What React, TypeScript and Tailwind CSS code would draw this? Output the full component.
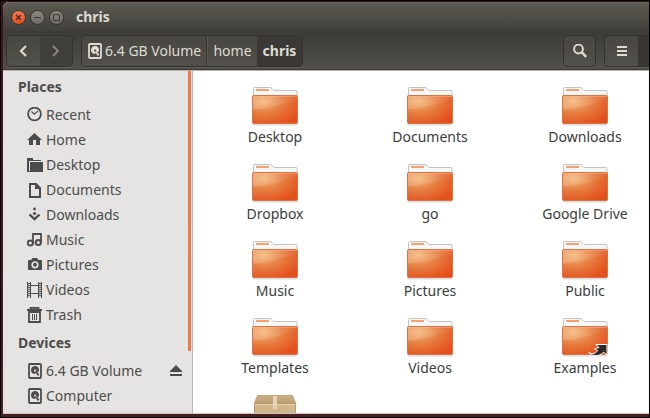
import { type FC, type ReactNode } from 'react';
import { twMerge } from 'tailwind-merge';

type IconName =
  | 'recent'
  | 'home'
  | 'desktop'
  | 'documents'
  | 'downloads'
  | 'music'
  | 'pictures'
  | 'videos'
  | 'trash'
  | 'drive';

const places: { label: string; icon: IconName }[] = [
  { label: 'Recent', icon: 'recent' },
  { label: 'Home', icon: 'home' },
  { label: 'Desktop', icon: 'desktop' },
  { label: 'Documents', icon: 'documents' },
  { label: 'Downloads', icon: 'downloads' },
  { label: 'Music', icon: 'music' },
  { label: 'Pictures', icon: 'pictures' },
  { label: 'Videos', icon: 'videos' },
  { label: 'Trash', icon: 'trash' },
];

const folders = [
  'Desktop',
  'Documents',
  'Downloads',
  'Dropbox',
  'go',
  'Google Drive',
  'Music',
  'Pictures',
  'Public',
  'Templates',
  'Videos',
  'Examples',
];

const iconShapes: Record<IconName, ReactNode> = {
  recent: (
    <>
      <circle cx="7.5" cy="7" r="6.4" fill="none" stroke="currentColor" strokeWidth="1.8" />
      <path d="M4.5 4.5 L7.3 7.2 L11 4" fill="none" stroke="currentColor" strokeWidth="1.2" />
    </>
  ),
  home: <path d="M7.5 1 L15 8 H13 V13 H9 V8 H6 V13 H2 V8 H0 Z" />,
  desktop: (
    <>
      <path d="M0 1 H6 V3 H14 V4 H2 V14 H0 Z" />
      <path d="M3 5 H16 V15 H0 V14 H3 Z" />
    </>
  ),
  documents: (
    <>
      <path d="M3 2 H9 L13 6 V15 H3 Z" fill="none" stroke="currentColor" strokeWidth="2" />
      <path d="M8 2 V7 H13 Z" />
    </>
  ),
  downloads: (
    <>
      <circle cx="7.5" cy="2" r="1.4" />
      <circle cx="7.5" cy="6.5" r="1.6" />
      <path d="M2.5 7.5 L7.5 12.2 L12.5 7.5" fill="none" stroke="currentColor" strokeWidth="2.4" />
    </>
  ),
  music: (
    <>
      <path d="M6 12 V2 H14 V11" fill="none" stroke="currentColor" strokeWidth="1.8" />
      <circle cx="3.3" cy="11" r="2.6" fill="none" stroke="currentColor" strokeWidth="2" />
      <circle cx="11.3" cy="10.5" r="2.6" fill="none" stroke="currentColor" strokeWidth="2" />
    </>
  ),
  pictures: (
    <>
      <path d="M1 4 Q1 3 2 3 H4 L5.5 1 H10 L11.5 3 H14 Q15 3 15 4 V12 Q15 13 14 13 H2 Q1 13 1 12 Z" />
      <circle cx="8" cy="7.8" r="3.6" fill="#e6e4e2" />
      <circle cx="8" cy="7.8" r="2" />
    </>
  ),
  videos: (
    <>
      <path d="M0 0 H1 V1 H3 V0 H4 V16 H3 V15 H1 V16 H0 Z M11 0 H12 V1 H14 V0 H15 V16 H14 V15 H12 V16 H11 Z" />
      <path d="M4 3.5 H11 M4 11.5 H11" stroke="currentColor" strokeWidth="1" />
      <path d="M2 2 V15 M13 2 V15" stroke="#e6e4e2" strokeWidth="1.6" strokeDasharray="1.2 0.8" />
    </>
  ),
  trash: (
    <>
      <path d="M0 3 H15 M3.5 3 V0.8 H11.5 V3" fill="none" stroke="currentColor" strokeWidth="1.8" />
      <path d="M2 5 V15 H13 V5 Z" fill="none" stroke="currentColor" strokeWidth="1.8" />
      <path d="M5.5 7 V13 M7.5 7 V13 M9.5 7 V13" stroke="currentColor" strokeWidth="1" />
    </>
  ),
  drive: (
    <>
      <rect x="2" y="1" width="12" height="14" rx="1" fill="none" stroke="currentColor" strokeWidth="1.8" />
      <path d="M8 3 C10.7 3 12 4.7 12 7 C12 8.2 11.6 9 11 9.6 L9 7.5 C9 6.4 7.2 6.2 7 7.4 C6.9 8.2 7.4 8.6 8 8.8 L8.4 11 C5.6 11 4 9.6 4 7 C4 4.7 5.6 3 8 3 Z" />
      <path d="M8.4 8.2 L11.7 12.4" stroke="currentColor" strokeWidth="1.8" />
    </>
  ),
};

const Icon: FC<{ name: IconName; className?: string }> = ({ name, className }) => (
  <svg viewBox="0 0 16 16" fill="currentColor" className={twMerge('size-4 shrink-0', className)}>
    {iconShapes[name]}
  </svg>
);

const FolderIcon: FC<{ link?: boolean }> = ({ link }) => (
  <svg viewBox="0 0 48 40" className="h-10 w-12">
    <rect x="2" y="37" width="44" height="2.5" rx="1" fill="#000" opacity="0.14" />
    <path
      d="M2.5 12 V2.5 Q2.5 1.5 3.5 1.5 H19 Q20 1.5 21 2.5 L23 4.5 H45 Q46 4.5 46 5.5 V12 Z"
      fill="#f6f6f5"
      stroke="#c3c3c1"
    />
    <rect x="5" y="3" width="13" height="2" rx="0.5" fill="#f3a070" />
    <rect x="1.5" y="9.5" width="45" height="28" rx="1" fill="url(#folderFill)" stroke="#d9744a" />
    <path d="M2 10 H46 V14 C32 17 18 23 2 23.5 Z" fill="url(#folderShine)" />
    <path d="M2 10.5 H46" stroke="#f7b98f" opacity="0.5" />
    {link && (
      <path
        d="M35 27.5 H46 V38 L42.5 35.2 C39 40 30 39.5 27.5 35 C31 38 35 36.5 36.5 33.5 L33.5 32 L38 30.5 Z"
        fill="#2d2826"
        stroke="#fff"
        strokeWidth="1"
      />
    )}
  </svg>
);

const PackageIcon: FC = () => (
  <svg viewBox="0 0 48 40" className="h-10 w-12">
    <path d="M6.5 1.5 H41.5 L45 10 H3 Z" fill="url(#boxLid)" stroke="#c3a57a" />
    <rect x="3.5" y="9.5" width="41" height="29" fill="#d1b58b" stroke="#bb9c72" />
    <path d="M4 10.5 H44" stroke="#e6d4b6" />
    <path d="M22 2 H26 V15 H22 Z" fill="#e4d4ba" />
  </svg>
);

const SidebarHeading: FC<{ children: ReactNode }> = ({ children }) => (
  <h2 className="flex h-[31px] items-center pl-[15px] font-bold">{children}</h2>
);

const SidebarRow: FC<{ icon: IconName; label: string; children?: ReactNode }> = ({ icon, label, children }) => (
  <li className="flex h-[25px] items-center pr-0.5 pl-6">
    <a href="#" className="flex flex-1 items-center gap-[3px]">
      <Icon name={icon} />
      <span>{label}</span>
    </a>
    {children}
  </li>
);

const groupStyle =
  'flex h-8 overflow-hidden rounded-[4px] border border-[#33322e] bg-linear-to-b from-[#474640] to-[#52504a] shadow-[0_1px_0_#5c5a53]';

const windowButton =
  'flex size-[15px] items-center justify-center rounded-full border border-[#35332f] bg-linear-to-b from-[#8d8a82] to-[#6b6962] text-[#3a3935]';

const Window: FC = () => (
  <div className="flex h-full flex-col overflow-hidden rounded-tl-md bg-white">
    <header className="flex h-[29px] shrink-0 items-center border-t border-[#6b685f] bg-linear-to-b from-[#5d5b52] to-[#403f3a] pl-2">
      <div className="flex gap-1">
        <button aria-label="Close" className={twMerge(windowButton, 'from-[#f47c55] to-[#e2501f] text-[#4d1d0c]')}>
          <svg viewBox="0 0 7 7" className="size-[7px]">
            <path d="M1 1 L6 6 M6 1 L1 6" stroke="currentColor" strokeWidth="1.2" />
          </svg>
        </button>
        <button aria-label="Minimize" className={windowButton}>
          <svg viewBox="0 0 7 7" className="size-[7px]">
            <path d="M0 3.5 H7" stroke="currentColor" />
          </svg>
        </button>
        <button aria-label="Maximize" className={windowButton}>
          <svg viewBox="0 0 7 7" className="size-[7px]">
            <path d="M0.5 0.5 H6.5 V6.5 H0.5 Z" fill="none" stroke="currentColor" />
          </svg>
        </button>
      </div>
      <h1 className="pl-3 font-bold text-[#dfdbd2]">chris</h1>
    </header>

    <div className="flex h-10 shrink-0 items-center border-b border-[#b9b4ae] bg-linear-to-b from-[#3c3b37] to-[#52504a] pl-[3px] text-[#dfdbd2] shadow-[inset_0_-1px_0_#3c3b37]">
      <div className={twMerge(groupStyle, 'w-[67px]')}>
        <button aria-label="Back" className="flex flex-1 items-center justify-center">
          <svg viewBox="0 0 8 12" className="h-3 w-2">
            <path d="M7 1 L2 6 L7 11" fill="none" stroke="currentColor" strokeWidth="2.2" />
          </svg>
        </button>
        <button
          aria-label="Forward"
          className="flex flex-1 items-center justify-center bg-[#403f3a] text-[#8c8981]"
        >
          <svg viewBox="0 0 8 12" className="h-3 w-2">
            <path d="M1 1 L6 6 L1 11" fill="none" stroke="currentColor" strokeWidth="1.8" />
          </svg>
        </button>
      </div>
      <nav className={twMerge(groupStyle, 'ml-2')}>
        <button className="flex w-[125px] items-center gap-[2px] border-r border-[#35342f] pl-[5px] whitespace-nowrap">
          <Icon name="drive" />
          <span>6.4 GB Volume</span>
        </button>
        <button className="w-[50px] border-l border-[#5c5a53]">home</button>
        <button className="w-[45px] bg-[#3a3935] font-bold">chris</button>
      </nav>
      <button aria-label="Search" className={twMerge(groupStyle, 'ml-auto w-[33px] items-center justify-center')}>
        <svg viewBox="0 0 14 14" className="size-3.5">
          <circle cx="5.5" cy="5" r="4.4" fill="none" stroke="currentColor" strokeWidth="2" />
          <path d="M8.6 8.2 L13.2 12.8" stroke="currentColor" strokeWidth="2.4" />
        </svg>
      </button>
      <div className={twMerge(groupStyle, 'ml-2 w-[45px] rounded-r-none border-r-0')}>
        <button aria-label="List view" className="flex w-[33px] items-center justify-center">
          <svg viewBox="0 0 10 10" className="size-2.5" fill="currentColor">
            <path d="M0 0 H10 V2 H0 Z M0 4 H10 V6 H0 Z M0 8 H10 V10 H0 Z" />
          </svg>
        </button>
        <button aria-label="Grid view" className="flex-1 bg-[#373632]" />
      </div>
    </div>

    <div className="flex min-h-0 flex-1 border-b border-[#c9c6c2]">
      <aside className="flex w-[190px] shrink-0 border-r border-[#b9b7b4] bg-[#e6e4e2] text-[#4c4c4c]">
        <div className="flex-1">
          <SidebarHeading>Places</SidebarHeading>
          <ul>
            {places.map((p) => (
              <SidebarRow key={p.label} icon={p.icon} label={p.label} />
            ))}
          </ul>
          <SidebarHeading>Devices</SidebarHeading>
          <ul>
            <SidebarRow icon="drive" label="6.4 GB Volume">
              <button aria-label="Eject" className="px-1">
                <svg viewBox="0 0 12 12" className="size-3" fill="currentColor">
                  <path d="M6 0 L12 6 V7 H0 V6 Z M0 9 H12 V11 H0 Z" />
                </svg>
              </button>
            </SidebarRow>
            <SidebarRow icon="drive" label="Computer" />
          </ul>
        </div>
        {/* overlay scrollbar thumb */}
        <div className="h-[82%] w-[3px] bg-[#f07746]" />
        {/* resize grip */}
        <div className="flex w-px items-center">
          <div className="h-8 w-px border-l border-dotted border-white" />
        </div>
      </aside>

      <main className="min-w-0 flex-1 overflow-hidden pt-[15px] pr-3.5 pl-8 text-[#3c3c3c]">
        <ul className="grid grid-cols-3 gap-x-[55px] gap-y-[15px]">
          {folders.map((name) => (
            <li key={name} className="flex flex-col items-center">
              <FolderIcon link={name === 'Examples'} />
              <span className="leading-[22px] whitespace-nowrap">{name}</span>
            </li>
          ))}
          <li className="flex flex-col items-center">
            <PackageIcon />
          </li>
        </ul>
      </main>
    </div>
  </div>
);

const App: FC = () => (
  <div className="h-screen overflow-hidden border border-black bg-linear-to-b from-[#3d1220] to-[#4a2020] pt-px pb-[3px] pl-[2px] font-['Noto_Sans',sans-serif] text-[14px] leading-5">
    {/* shared gradients for the file icons */}
    <svg className="absolute size-0" aria-hidden="true">
      <defs>
        <radialGradient id="folderFill" cx="0.25" cy="0.2" r="0.9">
          <stop offset="0" stopColor="#f3b677" />
          <stop offset="0.5" stopColor="#e67c40" />
          <stop offset="1" stopColor="#e4501b" />
        </radialGradient>
        <linearGradient id="folderShine" x1="0" y1="0" x2="1" y2="0">
          <stop offset="0" stopColor="#fff" stopOpacity="0.18" />
          <stop offset="1" stopColor="#fff" stopOpacity="0.04" />
        </linearGradient>
        <linearGradient id="boxLid" x1="0" y1="0" x2="0" y2="1">
          <stop offset="0" stopColor="#cdb084" />
          <stop offset="1" stopColor="#bb9c72" />
        </linearGradient>
      </defs>
    </svg>
    <Window />
  </div>
);

export default App;
